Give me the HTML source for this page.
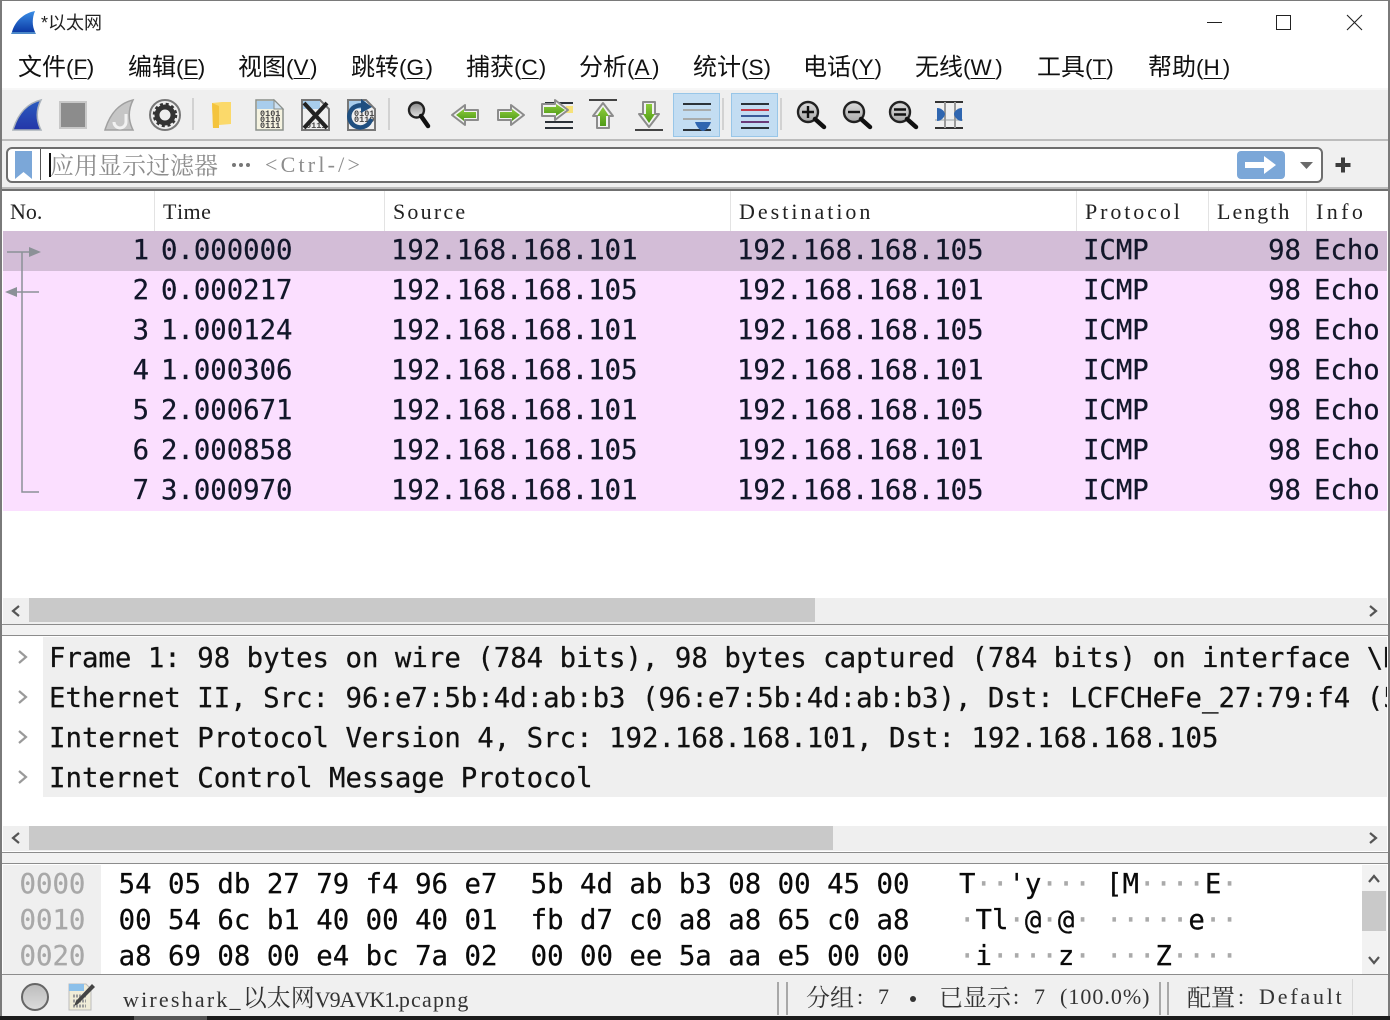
<!DOCTYPE html>
<html lang="zh">
<head>
<meta charset="utf-8">
<title>*以太网</title>
<style>
html,body{margin:0;padding:0;background:#fff}
#w{position:relative;width:1390px;height:1020px;overflow:hidden;background:#fff;font-family:"Liberation Sans","Noto Sans CJK SC",sans-serif}
.a{position:absolute}
.t{position:absolute;white-space:pre}
.m{font-size:22.500px;line-height:34px;top:51px;color:#111;font-family:"Liberation Sans","Noto Sans CJK SC",sans-serif}
.m i{font-style:normal;font-size:24px}
.m u{text-decoration:underline;text-underline-offset:3px;text-decoration-thickness:1px}
.h{font-family:"Liberation Serif","Noto Serif CJK SC",serif;font-kerning:none;font-size:22px;line-height:40px;top:192px;color:#222}
.v{position:absolute;top:191px;width:1px;height:40px;background:#e3e3e3}
.r{position:absolute;left:3px;width:1384px;height:40px;background:#fbdfff;overflow:hidden}
.r span{position:absolute;top:0;line-height:39px;white-space:pre;font-family:"DejaVu Sans Mono",monospace;font-size:27.300px;color:#12172a;-webkit-text-stroke:.25px #12172a}
.c1{right:1238px}.c2{left:158px}.c3{left:388px}.c4{left:734px}.c5{left:1080px}.c6{right:86px}.c7{left:1311px}
.d{position:absolute;left:43px;width:1344px;height:40px;background:#efefef;overflow:hidden}
.d span{position:absolute;left:6px;top:2px;line-height:40px;white-space:pre;font-family:"DejaVu Sans Mono",monospace;font-size:27.370px;color:#111;-webkit-text-stroke:.25px #111}
.x{font-family:"DejaVu Sans Mono",monospace;font-size:27.370px;line-height:36px;color:#0a0a0a;-webkit-text-stroke:.25px #0a0a0a}
.o{color:#a8a8a8;left:19.500px;-webkit-text-stroke:.25px #a8a8a8}
.g{color:#aaa;-webkit-text-stroke:.25px #aaa}
.s{font-family:"Liberation Serif","Noto Serif CJK SC",serif;font-kerning:none;font-size:22px;line-height:30px;color:#333;top:982px}
.s b{font-weight:normal;font-size:24px;letter-spacing:0;font-family:"Noto Serif CJK SC",serif;position:relative;top:-1px}
</style>
</head>
<body>
<div id="w">
<!-- title bar -->
<svg class="a" style="left:11px;top:10px" width="26" height="25" viewBox="0 0 26 25">
<defs><linearGradient id="tg" x1="0" y1="0" x2="0" y2="1"><stop offset="0" stop-color="#3a8ee6"/><stop offset="1" stop-color="#0c3aa5"/></linearGradient></defs>
<path d="M1 22C4 11 13 3 24 1C21 8 21 16 24 22Z" fill="url(#tg)"/><path d="M1 22H24L25 24H0Z" fill="#4c88c8"/></svg>
<div class="t" style="left:41px;top:10px;font-size:18px;line-height:26px;color:#222">*以太网</div>
<div class="a" style="left:1207px;top:22px;width:15px;height:1px;background:#222"></div>
<div class="a" style="left:1276px;top:15px;width:13px;height:13px;border:1px solid #222"></div>
<svg class="a" style="left:1346px;top:14px" width="17" height="17"><path d="M1 1L16 16M16 1L1 16" stroke="#222" stroke-width="1.100" fill="none"/></svg>
<!-- menu -->
<div class="t m" style="left:18px"><i>文件</i>(<u style="letter-spacing:-.5px">F</u>)</div>
<div class="t m" style="left:128px"><i>编辑</i>(<u style="letter-spacing:-.8px">E</u>)</div>
<div class="t m" style="left:238px"><i>视图</i>(<u style="letter-spacing:1.500px">V</u>)</div>
<div class="t m" style="left:351px"><i>跳转</i>(<u style="letter-spacing:1.500px">G</u>)</div>
<div class="t m" style="left:466px"><i>捕获</i>(<u style="letter-spacing:1px">C</u>)</div>
<div class="t m" style="left:579px"><i>分析</i>(<u style="letter-spacing:2.500px">A</u>)</div>
<div class="t m" style="left:693px"><i>统计</i>(<u>S</u>)</div>
<div class="t m" style="left:803px"><i>电话</i>(<u style="letter-spacing:1px">Y</u>)</div>
<div class="t m" style="left:915px"><i>无线</i>(<u style="letter-spacing:3.500px">W</u>)</div>
<div class="t m" style="left:1037px"><i>工具</i>(<u>T</u>)</div>
<div class="t m" style="left:1148px"><i>帮助</i>(<u style="letter-spacing:3px">H</u>)</div>
<!-- toolbar -->
<div class="a" style="left:2px;top:88px;width:1386px;height:2px;background:#f7f7f7"></div>
<div class="a" style="left:2px;top:90px;width:1386px;height:49px;background:#efefef"></div>
<div class="a" style="left:2px;top:139px;width:1386px;height:2px;background:#bcbcbc"></div>
<div class="a" style="left:2px;top:141px;width:1386px;height:47px;background:#f0f0f0"></div>
<div class="a" style="left:673px;top:93px;width:45px;height:42px;background:#c3ddf2;border:1px solid #98c6e8"></div>
<div class="a" style="left:731px;top:93px;width:45px;height:42px;background:#c3ddf2;border:1px solid #98c6e8"></div>
<svg class="a" style="left:0;top:90px" width="1000" height="50" viewBox="0 90 1000 50">
<defs>
<linearGradient id="fin" x1="0" y1="0" x2="0" y2="1"><stop offset="0" stop-color="#2a5cc0"/><stop offset="1" stop-color="#2436a8"/></linearGradient>
<linearGradient id="gr" x1="0" y1="0" x2="0" y2="1"><stop offset="0" stop-color="#8ccc3a"/><stop offset="1" stop-color="#4f9a18"/></linearGradient>
<linearGradient id="gl" x1="0" y1="0" x2="0" y2="1"><stop offset="0" stop-color="#8a8a8a"/><stop offset="1" stop-color="#e4e4e4"/></linearGradient>
<linearGradient id="gs" x1="0" y1="0" x2="0" y2="1"><stop offset="0" stop-color="#dcdcdc"/><stop offset="1" stop-color="#a8a8a8"/></linearGradient>
</defs>
<path d="M13 130C18 113 28 103 41 100C36 110 36 120 41 130Z" fill="url(#fin)" stroke="#aab2ba" stroke-width="1.500"/>
<rect x="60" y="102" width="26" height="26" fill="#8c8c8c" stroke="#c8c8c8" stroke-width="2"/>
<path d="M105 130C110 113 120 103 133 100C128 110 128 120 133 130Z" fill="#c6c6c6" stroke="#a0a0a0" stroke-width="1.500"/>
<path d="M126 114V122a6 6 0 0 1-12 0" fill="none" stroke="#f2f2f2" stroke-width="3"/>
<circle cx="165" cy="115" r="15" fill="#eee" stroke="#777" stroke-width="2"/>
<circle cx="165" cy="115" r="8" fill="none" stroke="#333" stroke-width="5"/>
<circle cx="165" cy="115" r="11" fill="none" stroke="#333" stroke-width="2.500" stroke-dasharray="3 2.800"/>
<rect x="192" y="98" width="2" height="32" fill="#d2d2d2"/>
<path d="M212 103L222 102H231V124L219 125L213 128Z" fill="#fbd96a"/><path d="M212 103L219 106V128L213 128Z" fill="#f4c43e"/>
<path d="M256 100H274L283 109V130H256Z" fill="#f5f3e0" stroke="#8a8f8a" stroke-width="1.500"/>
<path d="M257 101H274V109H257Z" fill="#a8cdec"/><path d="M274 100V109H283Z" fill="#cfe2f2" stroke="#8a8f8a"/>
<g font-family="'Liberation Mono',monospace" font-size="8.500" fill="#444" font-weight="bold">
<text x="260" y="116">0101</text><text x="260" y="122">0110</text><text x="260" y="128">0111</text>
<text x="306" y="128">0111</text>
<text x="354" y="116">0101</text><text x="354" y="122">0110</text>
</g>
<path d="M302 100H320L329 109V130H302Z" fill="none" stroke="#777" stroke-width="2"/><path d="M303 101H320V109H303Z" fill="#a8cdec"/>
<path d="M304 103L327 128M327 103L304 128" stroke="#222" stroke-width="4"/>
<path d="M348 100H366L375 109V130H348Z" fill="none" stroke="#777" stroke-width="2"/><path d="M349 101H366V109H349Z" fill="#a8cdec"/>
<path d="M366 107a11 11 0 1 0 5 12" fill="none" stroke="#1f4f80" stroke-width="4.500"/><path d="M361 99L372 107L361 113Z" fill="#1f4f80"/>
<rect x="388" y="98" width="2" height="32" fill="#d2d2d2"/>
<circle cx="416.500" cy="110" r="7.500" fill="url(#gl)" stroke="#222" stroke-width="2.400"/><path d="M421 116L428 126" stroke="#111" stroke-width="4.500" stroke-linecap="round"/>
<path d="M452 115L465 105V110H478V120H465V125Z" fill="#f2f2f2" stroke="#8c8c8c" stroke-width="2" stroke-linejoin="round"/>
<path d="M456 115L464 109V112H476V118H464V121Z" fill="url(#gr)"/>
<path d="M524 115L511 105V110H498V120H511V125Z" fill="#f2f2f2" stroke="#8c8c8c" stroke-width="2" stroke-linejoin="round"/>
<path d="M520 115L512 109V112H500V118H512V121Z" fill="url(#gr)"/>
<path d="M545 103H573M545 122H573M545 128H573" stroke="#2b3238" stroke-width="2"/><rect x="566" y="106" width="7" height="7" fill="#f6e27a"/>
<path d="M568 110L555 100V104H542V116H555V120Z" fill="#f2f2f2" stroke="#8c8c8c" stroke-width="2" stroke-linejoin="round"/>
<path d="M565 110L556 104V107H544V113H556V116Z" fill="url(#gr)"/>
<path d="M589 100H617" stroke="#444" stroke-width="2"/>
<path d="M603 103L613 116H609V128H597V116H593Z" fill="#f2f2f2" stroke="#8c8c8c" stroke-width="2" stroke-linejoin="round"/>
<path d="M603 107L609 116H606V126H600V116H597Z" fill="url(#gr)"/>
<path d="M635 130H663" stroke="#444" stroke-width="2"/>
<path d="M649 127L659 114H655V102H643V114H639Z" fill="#f2f2f2" stroke="#8c8c8c" stroke-width="2" stroke-linejoin="round"/>
<path d="M649 123L655 114H652V104H646V114H643Z" fill="url(#gr)"/>
<path d="M683 104H711" stroke="#2b3238" stroke-width="2"/><path d="M683 110H711M683 119H711" stroke="#a8abab" stroke-width="2"/><path d="M683 130H711" stroke="#2b3238" stroke-width="2"/>
<path d="M695 122H711C709 128 705 131 703 131C701 131 697 128 695 122Z" fill="#2f66b0"/>
<path d="M741 104H769" stroke="#2b3238" stroke-width="2"/><path d="M741 110H769" stroke="#c23a4a" stroke-width="2"/><path d="M741 116H769" stroke="#3a5a98" stroke-width="2"/><path d="M741 122H769" stroke="#6a3a78" stroke-width="2"/><path d="M741 128H769" stroke="#2b3238" stroke-width="2"/>
<rect x="722" y="98" width="2" height="32" fill="#d2d2d2"/>
<rect x="780" y="98" width="2" height="32" fill="#d2d2d2"/>
<g fill="none"><circle cx="808" cy="112" r="10" fill="url(#gs)" stroke="#222" stroke-width="2.400"/><path d="M815 119L824 127" stroke="#111" stroke-width="4.500" stroke-linecap="round"/><path d="M802 112H814M808 106V118" stroke="#111" stroke-width="2.400"/>
<circle cx="854" cy="112" r="10" fill="url(#gs)" stroke="#222" stroke-width="2.400"/><path d="M861 119L870 127" stroke="#111" stroke-width="4.500" stroke-linecap="round"/><path d="M848 112H860" stroke="#111" stroke-width="2.400"/>
<circle cx="900" cy="112" r="10" fill="url(#gs)" stroke="#222" stroke-width="2.400"/><path d="M907 119L916 127" stroke="#111" stroke-width="4.500" stroke-linecap="round"/><path d="M894 109.500H906M894 114.500H906" stroke="#111" stroke-width="2.400"/></g>
<path d="M935 102H963M935 128H963" stroke="#333" stroke-width="2"/><path d="M935 120H963" stroke="#c4c8c8" stroke-width="2"/><path d="M945 102V128M955 102V128" stroke="#999" stroke-width="2"/>
<path d="M937 108C942 108 945 112 945 114C945 116 942 121 937 121Z" fill="#2f66b0"/><path d="M962 108C957 108 954 112 954 114C954 116 957 121 962 121Z" fill="#2f66b0"/>
</svg>
<!-- filter -->
<div class="a" style="left:6px;top:147px;width:1313px;height:32px;border:2px solid #6e6e6e;border-radius:6px;background:#fff"></div>
<svg class="a" style="left:14px;top:150px" width="20" height="30"><path d="M1 1H18V29L9.500 22L1 29Z" fill="#7ba7d8"/></svg>
<div class="a" style="left:40px;top:149px;width:1px;height:31px;background:#555"></div>
<div class="a" style="left:49px;top:153px;width:2px;height:24px;background:#111"></div>
<div class="t" style="left:50px;top:147px;font-family:'Noto Serif CJK SC',serif;font-size:24px;line-height:34px;color:#8d8d8d">应用显示过滤器</div>
<div class="a" style="left:232px;top:163px;width:4px;height:4px;border-radius:50%;background:#777"></div>
<div class="a" style="left:239px;top:163px;width:4px;height:4px;border-radius:50%;background:#777"></div>
<div class="a" style="left:246px;top:163px;width:4px;height:4px;border-radius:50%;background:#777"></div>
<div class="t" style="left:265px;top:148px;font-family:'Liberation Serif',serif;font-kerning:none;font-size:22px;letter-spacing:3.200px;line-height:34px;color:#8d8d8d">&lt;Ctrl-/&gt;</div>
<div class="a" style="left:1237px;top:151px;width:48px;height:28px;background:#7ba7d8;border-radius:4px"></div>
<svg class="a" style="left:1244px;top:155px" width="34" height="20"><path d="M1 7H20V1L32 10L20 19V13H1Z" fill="#fff"/></svg>
<svg class="a" style="left:1299px;top:161px" width="15" height="9"><path d="M1 1H14L7.500 8Z" fill="#6a6a6a"/></svg>
<svg class="a" style="left:1334px;top:156px" width="18" height="18"><path d="M9 1.500V16.500M1.500 9H16.500" stroke="#3c3c3c" stroke-width="4"/></svg>
<!-- packet list -->
<div class="a" style="left:2px;top:187px;width:1386px;height:2px;background:#bcbcbc"></div>
<div class="a" style="left:2px;top:189px;width:1386px;height:2px;background:#707070"></div>
<div class="t h" style="left:10px">No.</div>
<div class="t h" style="left:163px;letter-spacing:.5px">Time</div>
<div class="t h" style="left:393px;letter-spacing:2.200px">Source</div>
<div class="t h" style="left:739px;letter-spacing:3px">Destination</div>
<div class="t h" style="left:1085px;letter-spacing:2.900px">Protocol</div>
<div class="t h" style="left:1217px;letter-spacing:2px">Length</div>
<div class="t h" style="left:1316px;letter-spacing:3.400px">Info</div>
<div class="v" style="left:154px"></div><div class="v" style="left:384px"></div><div class="v" style="left:730px"></div><div class="v" style="left:1076px"></div><div class="v" style="left:1208px"></div><div class="v" style="left:1306px"></div>
<div class="r" style="top:231px;background:#d3bdd7"><span class="c1">1</span><span class="c2">0.000000</span><span class="c3">192.168.168.101</span><span class="c4">192.168.168.105</span><span class="c5">ICMP</span><span class="c6">98</span><span class="c7">Echo</span></div>
<div class="r" style="top:271px"><span class="c1">2</span><span class="c2">0.000217</span><span class="c3">192.168.168.105</span><span class="c4">192.168.168.101</span><span class="c5">ICMP</span><span class="c6">98</span><span class="c7">Echo</span></div>
<div class="r" style="top:311px"><span class="c1">3</span><span class="c2">1.000124</span><span class="c3">192.168.168.101</span><span class="c4">192.168.168.105</span><span class="c5">ICMP</span><span class="c6">98</span><span class="c7">Echo</span></div>
<div class="r" style="top:351px"><span class="c1">4</span><span class="c2">1.000306</span><span class="c3">192.168.168.105</span><span class="c4">192.168.168.101</span><span class="c5">ICMP</span><span class="c6">98</span><span class="c7">Echo</span></div>
<div class="r" style="top:391px"><span class="c1">5</span><span class="c2">2.000671</span><span class="c3">192.168.168.101</span><span class="c4">192.168.168.105</span><span class="c5">ICMP</span><span class="c6">98</span><span class="c7">Echo</span></div>
<div class="r" style="top:431px"><span class="c1">6</span><span class="c2">2.000858</span><span class="c3">192.168.168.105</span><span class="c4">192.168.168.101</span><span class="c5">ICMP</span><span class="c6">98</span><span class="c7">Echo</span></div>
<div class="r" style="top:471px"><span class="c1">7</span><span class="c2">3.000970</span><span class="c3">192.168.168.101</span><span class="c4">192.168.168.105</span><span class="c5">ICMP</span><span class="c6">98</span><span class="c7">Echo</span></div>
<svg class="a" style="left:0;top:231px" width="50" height="280" viewBox="0 231 50 280">
<path d="M7 252H31M22 252V492H39M16 292H39" stroke="#8b9197" stroke-width="1.500" fill="none"/>
<path d="M29 247L41 252L29 257Z" fill="#8b9197"/><path d="M17 287L5 292L17 297Z" fill="#8b9197"/></svg>
<!-- scrollbar 1 -->
<div class="a" style="left:3px;top:598px;width:1384px;height:26px;background:#efefef"></div>
<div class="a" style="left:29px;top:598px;width:786px;height:24px;background:#c9c9c9"></div>
<svg class="a" style="left:10px;top:604px" width="12" height="14"><path d="M9 2L3 7L9 12" fill="none" stroke="#555" stroke-width="2.200"/></svg>
<svg class="a" style="left:1367px;top:604px" width="12" height="14"><path d="M3 2L9 7L3 12" fill="none" stroke="#555" stroke-width="2.200"/></svg>
<div class="a" style="left:2px;top:624px;width:1386px;height:1px;background:#8c8c8c"></div>
<div class="a" style="left:2px;top:625px;width:1386px;height:10px;background:#f2f2f2"></div>
<div class="a" style="left:2px;top:635px;width:1386px;height:1px;background:#8c8c8c"></div>
<!-- details -->
<div class="d" style="top:637px"><span>Frame 1: 98 bytes on wire (784 bits), 98 bytes captured (784 bits) on interface \Device</span></div>
<div class="d" style="top:677px"><span>Ethernet II, Src: 96:e7:5b:4d:ab:b3 (96:e7:5b:4d:ab:b3), Dst: LCFCHeFe_27:79:f4 (54:05:db</span></div>
<div class="d" style="top:717px"><span>Internet Protocol Version 4, Src: 192.168.168.101, Dst: 192.168.168.105</span></div>
<div class="d" style="top:757px"><span>Internet Control Message Protocol</span></div>
<svg class="a" style="left:16px;top:648px" width="14" height="140" viewBox="0 0 14 140"><path d="M3 3L10 9L3 15M3 43L10 49L3 55M3 83L10 89L3 95M3 123L10 129L3 135" fill="none" stroke="#9a9a9a" stroke-width="2.200"/></svg>
<!-- scrollbar 2 -->
<div class="a" style="left:3px;top:826px;width:1384px;height:25px;background:#efefef"></div>
<div class="a" style="left:29px;top:826px;width:804px;height:24px;background:#c9c9c9"></div>
<svg class="a" style="left:10px;top:831px" width="12" height="14"><path d="M9 2L3 7L9 12" fill="none" stroke="#555" stroke-width="2.200"/></svg>
<svg class="a" style="left:1367px;top:831px" width="12" height="14"><path d="M3 2L9 7L3 12" fill="none" stroke="#555" stroke-width="2.200"/></svg>
<div class="a" style="left:2px;top:852px;width:1386px;height:1px;background:#8c8c8c"></div>
<div class="a" style="left:2px;top:853px;width:1386px;height:10px;background:#f2f2f2"></div>
<div class="a" style="left:2px;top:863px;width:1386px;height:1px;background:#8c8c8c"></div>
<!-- hex -->
<div class="a" style="left:3px;top:865px;width:98px;height:109px;background:#efefef"></div>
<div class="t x o" style="top:867px">0000</div><div class="t x o" style="top:903px">0010</div><div class="t x o" style="top:939px">0020</div>
<div class="t x" style="left:118.600px;top:867px">54 05 db 27 79 f4 96 e7</div>
<div class="t x" style="left:118.600px;top:903px">00 54 6c b1 40 00 40 01</div>
<div class="t x" style="left:118.600px;top:939px">a8 69 08 00 e4 bc 7a 02</div>
<div class="t x" style="left:530.600px;top:867px">5b 4d ab b3 08 00 45 00</div>
<div class="t x" style="left:530.600px;top:903px">fb d7 c0 a8 a8 65 c0 a8</div>
<div class="t x" style="left:530.600px;top:939px">00 00 ee 5a aa e5 00 00</div>
<div class="t x" style="left:959px;top:867px">T<span class="g">··</span>'y<span class="g">···</span></div>
<div class="t x" style="left:959px;top:903px"><span class="g">·</span>Tl<span class="g">·</span>@<span class="g">·</span>@<span class="g">·</span></div>
<div class="t x" style="left:959px;top:939px"><span class="g">·</span>i<span class="g">····</span>z<span class="g">·</span></div>
<div class="t x" style="left:1106px;top:867px">[M<span class="g">····</span>E<span class="g">·</span></div>
<div class="t x" style="left:1106px;top:903px"><span class="g">·····</span>e<span class="g">··</span></div>
<div class="t x" style="left:1106px;top:939px"><span class="g">···</span>Z<span class="g">····</span></div>
<div class="a" style="left:1362px;top:865px;width:25px;height:109px;background:#f2f2f2"></div>
<div class="a" style="left:1362px;top:891px;width:24px;height:40px;background:#c9c9c9"></div>
<svg class="a" style="left:1367px;top:873px" width="14" height="12"><path d="M2 9L7 3L12 9" fill="none" stroke="#555" stroke-width="2.200"/></svg>
<svg class="a" style="left:1367px;top:954px" width="14" height="12"><path d="M2 3L7 9L12 3" fill="none" stroke="#555" stroke-width="2.200"/></svg>
<!-- status -->
<div class="a" style="left:2px;top:974px;width:1386px;height:1px;background:#8c8c8c"></div>
<div class="a" style="left:2px;top:975px;width:1386px;height:41px;background:#f0f0f0"></div>
<svg class="a" style="left:20px;top:982px" width="30" height="30"><defs><linearGradient id="cg" x1="0" y1="0" x2="0" y2="1"><stop offset="0" stop-color="#bcbcbc"/><stop offset="1" stop-color="#dcdcdc"/></linearGradient></defs><circle cx="15" cy="15" r="13" fill="url(#cg)" stroke="#666" stroke-width="2"/></svg>
<svg class="a" style="left:66px;top:982px" width="30" height="30">
<path d="M3 2H20L25 7V28H3Z" fill="#f0ecd8" stroke="#bbb"/><path d="M3 2H18V9H3Z" fill="#8cc0ea"/>
<path d="M7 14H20M7 19H20M7 24H20" stroke="#9a9a9a" stroke-width="3" stroke-dasharray="2 1"/>
<path d="M26 2L29 5L12 22L8 24L10 19Z" fill="#444"/></svg>
<div class="t s" style="left:123px"><span style="letter-spacing:2.200px">wireshark_</span><b>以太网</b><span style="letter-spacing:-1px">V9AVK1.</span><span style="letter-spacing:1.200px">pcapng</span></div>
<div class="a" style="left:777px;top:982px;width:2px;height:33px;background:#a8a8a8"></div>
<div class="a" style="left:786px;top:982px;width:2px;height:33px;background:#a8a8a8"></div>
<div class="t s" style="left:806px"><b>分组</b></div>
<div class="t s" style="left:857px">:</div>
<div class="t s" style="left:878px">7</div>
<div class="a" style="left:910px;top:996px;width:6px;height:6px;border-radius:50%;background:#333"></div>
<div class="t s" style="left:939px"><b>已显示</b></div>
<div class="t s" style="left:1013px">:</div>
<div class="t s" style="left:1034px">7</div>
<div class="t s" style="left:1060px;letter-spacing:1px">(100.0%)</div>
<div class="a" style="left:1159px;top:982px;width:2px;height:33px;background:#a8a8a8"></div>
<div class="a" style="left:1167px;top:982px;width:2px;height:33px;background:#a8a8a8"></div>
<div class="t s" style="left:1187px"><b>配置</b></div>
<div class="t s" style="left:1238px">:</div>
<div class="t s" style="left:1259px;letter-spacing:2.800px">Default</div>
<div class="a" style="left:1352px;top:979px;width:1px;height:36px;background:#d8d8d8"></div>
<!-- window edges -->
<div class="a" style="left:0;top:0;width:1390px;height:1px;background:#7a7a7a"></div>
<div class="a" style="left:0;top:0;width:2px;height:1016px;background:#7a7a7a"></div>
<div class="a" style="left:1388px;top:0;width:2px;height:1016px;background:#7a7a7a"></div>
<div class="a" style="left:0;top:1016px;width:1390px;height:4px;background:#1c1c1c"></div>
<div class="a" style="left:134px;top:1016px;width:73px;height:4px;background:#555"></div>
</div>
</body>
</html>
